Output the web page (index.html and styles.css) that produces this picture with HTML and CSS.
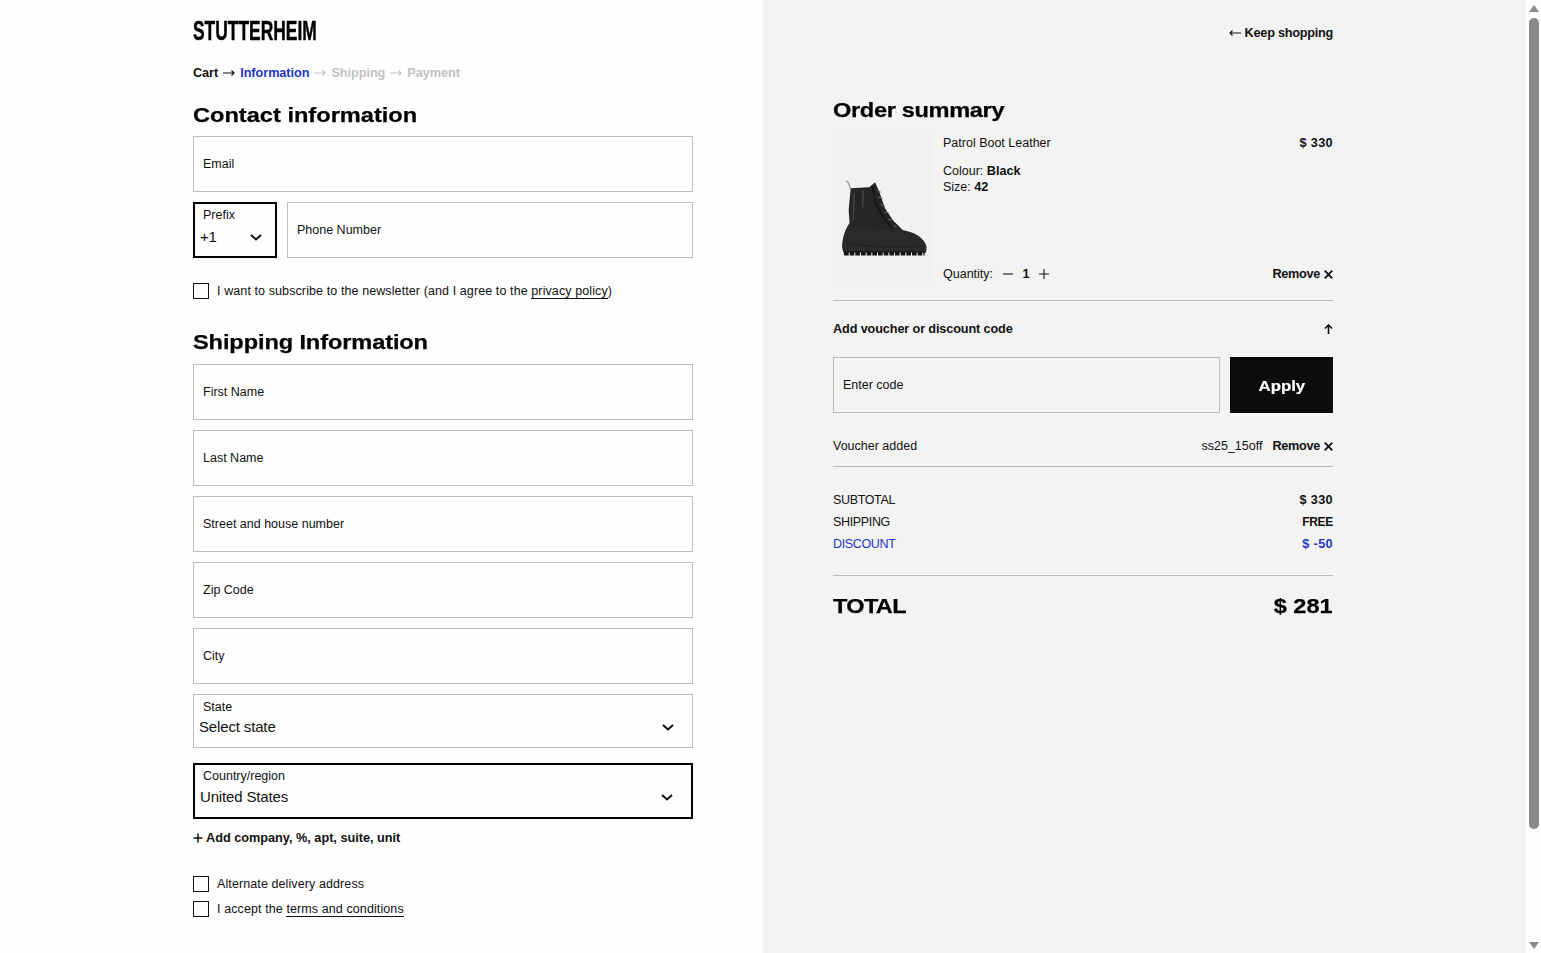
FILE: index.html
```html
<!DOCTYPE html>
<html>
<head>
	<meta charset="UTF-8">
	<title>Checkout</title>
	<link rel="stylesheet" href="styles.css">
</head>
<body>
	<div class="page">
		<div class="left">
			<div class="logo"><span>STUTTERHEIM</span></div>
			<div class="crumbs">
				<span class="done">Cart</span>
				<svg class="arrow done" viewBox="0 0 12 8"><path d="M0 4h11M8.500 1.500L11 4 8.500 6.500"/></svg>
				<span class="now">Information</span>
				<svg class="arrow" viewBox="0 0 12 8"><path d="M0 4h11M8.500 1.500L11 4 8.500 6.500"/></svg>
				<span>Shipping</span>
				<svg class="arrow" viewBox="0 0 12 8"><path d="M0 4h11M8.500 1.500L11 4 8.500 6.500"/></svg>
				<span>Payment</span>
			</div>
			<h2 class="title first"><span>Contact information</span></h2>
			<div class="field">Email</div>
			<div class="phone">
				<div class="select focus prefix">
					<div class="select-label">Prefix</div>
					<div class="select-value">+1
						<svg class="chev" viewBox="0 0 12 7"><path d="M1 1l5 4.500 5-4.500"/></svg>
					</div>
				</div>
				<div class="field grow">Phone Number</div>
			</div>
			<div class="check news"><i class="box"></i><span>I want to subscribe to the newsletter (and I agree to the <a class="link">privacy policy</a>)</span></div>
			<h2 class="title second"><span>Shipping Information</span></h2>
			<div class="field">First Name</div>
			<div class="field">Last Name</div>
			<div class="field">Street and house number</div>
			<div class="field">Zip Code</div>
			<div class="field">City</div>
			<div class="select state">
				<div class="select-label">State</div>
				<div class="select-value">Select state
					<svg class="chev" viewBox="0 0 12 7"><path d="M1 1l5 4.500 5-4.500"/></svg>
				</div>
			</div>
			<div class="select focus country">
				<div class="select-label">Country/region</div>
				<div class="select-value">United States
					<svg class="chev" viewBox="0 0 12 7"><path d="M1 1l5 4.500 5-4.500"/></svg>
				</div>
			</div>
			<div class="add"><svg class="plus" viewBox="0 0 10 10"><path d="M5 .5v9M.5 5h9"/></svg>Add company, %, apt, suite, unit</div>
			<div class="check alt"><i class="box"></i><span>Alternate delivery address</span></div>
			<div class="check terms"><i class="box"></i><span>I accept the <a class="link">terms and conditions</a></span></div>
		</div>

		<div class="right">
			<div class="keep"><svg class="back" viewBox="0 0 12 8"><path d="M12 4H1M3.500 1.500L1 4l2.500 2.500"/></svg>Keep shopping</div>
			<h2 class="title summary"><span>Order summary</span></h2>
			<div class="item">
				<div class="thumb">
					<svg viewBox="9 6 297 456" width="99" height="152">
						<defs><filter id="soft"><feGaussianBlur stdDeviation="1.500"/></filter></defs>
						<g filter="url(#soft)">
							<path fill="#252525" d="M62 175L118 172 135 157 148 185 165 235 190 272 222 304 60 300 56 240z"/>
							<path fill="#2b2b2b" d="M58 280C100 298 160 305 215 300 250 305 285 322 290 352L288 368 40 368 36 350C38 320 45 300 58 280z"/>
							<path fill="none" stroke="#161616" stroke-width="13" stroke-dasharray="14 3" d="M42 370H284"/>
							<path fill="none" stroke="#151515" stroke-width="5" d="M128 170l8 46 22 44 30 36"/>
							<path fill="none" stroke="#6a6a6a" stroke-width="3" d="M142 182l10 4M146 202l12 4M152 224l12 2M162 246l14 2M174 268l12 2M190 288l10 2"/>
							<path fill="none" stroke="#4a4a4a" stroke-width="4" d="M72 190l-2 80M100 182l-2 50"/>
							<path fill="none" stroke="#1a1a1a" stroke-width="2" d="M50 340c70 12 160 14 235 8"/>
							<path fill="none" stroke="#a0a0a0" stroke-width="4" d="M49 152l6 6 6 18"/>
						</g>
					</svg>
				</div>
				<div class="info">
					<div class="line">
						<span>Patrol Boot Leather</span>
						<b class="price">$ 330</b>
					</div>
					<div class="opts">
						<div>Colour: <b>Black</b></div>
						<div>Size: <b>42</b></div>
					</div>
					<div class="line qty-line">
						<div class="qty">
							<span class="qty-name">Quantity:</span>
							<svg class="qty-btn" viewBox="0 0 10 10"><path d="M0 5h10"/></svg>
							<b class="qty-num">1</b>
							<svg class="qty-btn" viewBox="0 0 10 10"><path d="M0 5h10M5 0v10"/></svg>
						</div>
						<b class="remove">Remove<svg class="x" viewBox="0 0 9 9"><path d="M.7.700l7.600 7.600M8.300.700L.7 8.300"/></svg></b>
					</div>
				</div>
			</div>
			<div class="rule rule-item"></div>
			<div class="line voucher-head">
				<b>Add voucher or discount code</b>
				<svg class="up" viewBox="0 0 9 10"><path d="M4.500 10V1M1 4.500l3.500-3.500 3.500 3.500"/></svg>
			</div>
			<div class="code">
				<div class="field grow">Enter code</div>
				<div class="apply"><span>Apply</span></div>
			</div>
			<div class="line added">
				<span>Voucher added</span>
				<div class="added-right">
					<span>ss25_15off</span>
					<b class="remove">Remove<svg class="x" viewBox="0 0 9 9"><path d="M.7.700l7.600 7.600M8.300.700L.7 8.300"/></svg></b>
				</div>
			</div>
			<div class="rule rule-added"></div>
			<div class="line row-sub"><span class="caps">SUBTOTAL</span><b class="price">$ 330</b></div>
			<div class="line row"><span class="caps">SHIPPING</span><b class="free">FREE</b></div>
			<div class="line row blue"><span class="caps">DISCOUNT</span><b class="price">$ -50</b></div>
			<div class="rule rule-total"></div>
			<div class="total"><span class="total-name">TOTAL</span><span class="total-sum">$ 281</span></div>
		</div>

		<div class="scroll">
			<div class="tri up-tri"></div>
			<div class="track"><div class="thumb-bar"></div></div>
			<div class="tri down-tri"></div>
		</div>
	</div>
</body>
</html>
```
FILE: styles.css
```css
* {
	margin: 0;
	padding: 0;
	box-sizing: border-box;
}
html, body {
	height: 953px;
	overflow: hidden;
	background: #fff;
}
body {
	font-family: "Liberation Sans", Arial, sans-serif;
	font-size: 12.500px;
	line-height: 16px;
	color: #111;
}
b {
	font-size: 12.700px;
	font-weight: bold;
}
.page {
	display: flex;
	height: 953px;
}

/* left column */
.left {
	width: 763px;
	padding: 20px 70px 0 193px;
	background: #fefefe;
}
.logo {
	height: 22px;
	line-height: 22px;
	font-size: 27px;
	font-weight: bold;
	color: #000;
	white-space: nowrap;
	-webkit-text-stroke: .5px #000;
}
.logo span {
	display: inline-block;
	transform: scaleX(.645);
	transform-origin: left center;
}
.crumbs {
	display: flex;
	align-items: center;
	gap: 5px;
	margin-top: 23px;
	font-size: 12.700px;
	font-weight: bold;
	letter-spacing: -.05px;
	color: #c2c2c2;
	white-space: nowrap;
}
.crumbs .done {
	color: #111;
}
.crumbs .now {
	color: #2336c4;
}
.arrow {
	width: 12px;
	height: 8px;
	fill: none;
	stroke: #c2c2c2;
	stroke-width: 1.100;
}
.arrow.done {
	stroke: #111;
}
.title {
	height: 24px;
	line-height: 24px;
	font-size: 20px;
	font-weight: bold;
	color: #000;
	white-space: nowrap;
	-webkit-text-stroke: .25px #000;
}
.title span {
	display: inline-block;
	transform: scaleX(1.18);
	transform-origin: left center;
}
.title.first {
	margin-top: 22px;
	margin-bottom: 9px;
}
.title.second {
	margin-top: 31px;
	margin-bottom: 10px;
	letter-spacing: -.1px;
}
.field {
	display: flex;
	align-items: center;
	height: 56px;
	padding-left: 9px;
	border: 1px solid #bbb;
	margin-bottom: 10px;
}
.grow {
	flex: 1;
	margin-bottom: 0;
}
.phone {
	display: flex;
	gap: 10px;
}
.select {
	border: 1px solid #bbb;
	padding: 4px 18px 0 5px;
}
.select-label {
	margin-left: 4px;
}
.select-value {
	display: flex;
	justify-content: space-between;
	align-items: center;
	height: 20px;
	margin-top: 2px;
	font-size: 15px;
	letter-spacing: -.15px;
}
.chev {
	width: 12px;
	height: 7px;
	fill: none;
	stroke: #111;
	stroke-width: 2;
}
.focus {
	border: 2px solid #000;
}
.focus .select-label {
	margin-left: 3px;
}
.prefix {
	width: 84px;
	height: 56px;
	padding: 3px 13px 0 5px;
}
.prefix .select-value {
	margin-top: 4px;
}
.state {
	height: 54px;
}
.country {
	height: 56px;
	margin-top: 15px;
	padding-top: 3px;
}
.country .select-value {
	margin-top: 3px;
}
.check {
	display: flex;
	align-items: center;
	gap: 8px;
	height: 16px;
	letter-spacing: .1px;
}
.box {
	width: 16px;
	height: 16px;
	border: 1px solid #111;
	background: #fff;
}
.link {
	border-bottom: 1px solid #111;
}
.news {
	margin-top: 25px;
}
.alt {
	margin-top: 30px;
}
.terms {
	margin-top: 9px;
}
.add {
	display: flex;
	align-items: center;
	gap: 3px;
	margin-top: 11px;
	font-size: 12.700px;
	font-weight: bold;
}
.plus {
	width: 10px;
	height: 10px;
	fill: none;
	stroke: #111;
	stroke-width: 1.500;
}

/* right column */
.right {
	width: 763px;
	padding: 25px 193px 0 70px;
	background: #f3f3f3;
}
.keep {
	display: flex;
	justify-content: flex-end;
	align-items: center;
	gap: 4px;
	font-size: 12.700px;
	font-weight: bold;
	letter-spacing: -.25px;
}
.back {
	width: 12px;
	height: 8px;
	fill: none;
	stroke: #111;
	stroke-width: 1.100;
}
.title.summary {
	margin-top: 57px;
	letter-spacing: -.3px;
}
.item {
	display: flex;
	gap: 11px;
	height: 152px;
	margin-top: 10px;
}
.thumb {
	width: 99px;
	height: 152px;
	background: #f1f1f1;
}
.thumb svg {
	display: block;
}
.info {
	flex: 1;
	display: flex;
	flex-direction: column;
	padding: 3px 0 2px;
}
.line {
	display: flex;
	justify-content: space-between;
	align-items: center;
}
.opts {
	flex: 1;
	margin-top: 12px;
}
.qty {
	display: flex;
	align-items: center;
}
.qty-btn {
	width: 10px;
	height: 10px;
	fill: none;
	stroke: #111;
	stroke-width: 1.100;
}
.qty-name {
	margin-right: 10px;
}
.qty-num {
	width: 26px;
	text-align: center;
}
.remove {
	display: flex;
	align-items: center;
	gap: 4px;
	letter-spacing: -.3px;
}
.price {
	letter-spacing: .35px;
}
.free {
	font-size: 12px;
	letter-spacing: -.3px;
}
.caps {
	letter-spacing: -.35px;
}
.x {
	width: 9px;
	height: 9px;
	fill: none;
	stroke: #111;
	stroke-width: 1.800;
}
.rule {
	height: 1px;
	background: #bbb;
}
.rule-item {
	margin-top: 16px;
}
.voucher-head {
	margin-top: 20px;
	letter-spacing: -.13px;
}
.up {
	width: 9px;
	height: 10px;
	fill: none;
	stroke: #111;
	stroke-width: 1.600;
}
.code {
	display: flex;
	gap: 10px;
	margin-top: 20px;
}
.code .field {
	margin-bottom: 0;
}
.apply {
	display: flex;
	align-items: center;
	justify-content: center;
	width: 103px;
	height: 56px;
	background: #0c0c0c;
	color: #fff;
	font-size: 15px;
	font-weight: bold;
	-webkit-text-stroke: .2px #fff;
}
.apply span {
	display: inline-block;
	transform: scaleX(1.12);
	position: relative;
	top: 1px;
}
.added {
	margin-top: 25px;
}
.added-right {
	display: flex;
	align-items: center;
	gap: 10px;
}
.rule-added {
	margin-top: 12px;
}
.row-sub {
	margin-top: 25px;
}
.row {
	margin-top: 6px;
}
.blue {
	color: #2336c4;
}
.rule-total {
	margin-top: 23px;
}
.total {
	display: flex;
	justify-content: space-between;
	height: 24px;
	line-height: 24px;
	margin-top: 18px;
	font-size: 21px;
	font-weight: bold;
	color: #000;
	-webkit-text-stroke: .25px #000;
}
.total-name {
	display: inline-block;
	letter-spacing: -.6px;
	transform: scaleX(1.12);
	transform-origin: left center;
}
.total-sum {
	display: inline-block;
	transform: scaleX(1.12);
	transform-origin: right center;
}

/* scrollbar */
.scroll {
	flex: 1;
	display: flex;
	flex-direction: column;
	align-items: center;
	background: #fdfdfd;
}
.tri {
	width: 0;
	height: 0;
	border-left: 5px solid transparent;
	border-right: 5px solid transparent;
}
.up-tri {
	margin-top: 5px;
	border-bottom: 7px solid #8a8a8a;
}
.down-tri {
	margin-bottom: 4px;
	border-top: 7px solid #8a8a8a;
}
.track {
	flex: 1;
	width: 10px;
	padding-top: 6px;
}
.thumb-bar {
	height: 811px;
	background: #8a8a8a;
	border-radius: 5px;
}
```
